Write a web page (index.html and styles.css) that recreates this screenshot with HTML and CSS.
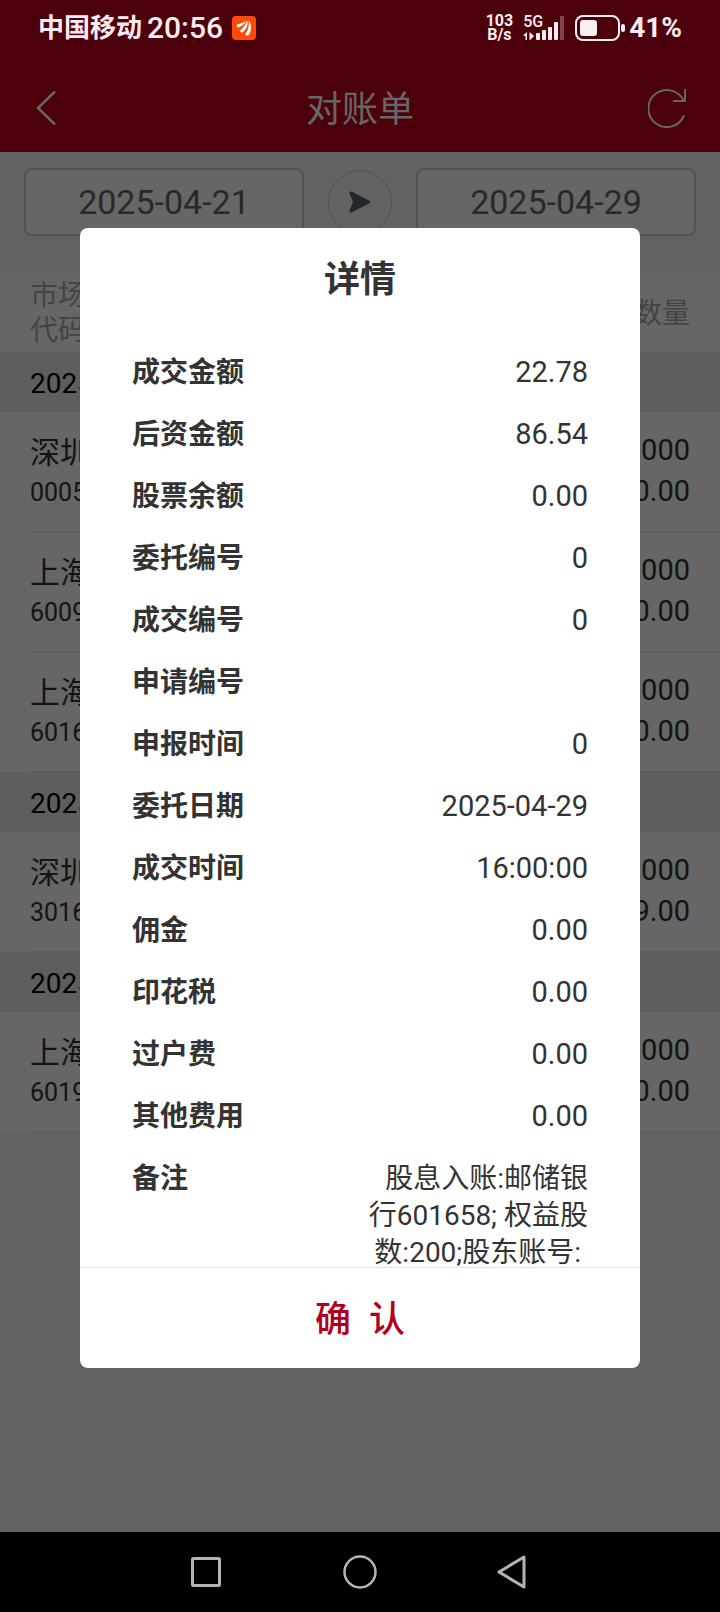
FILE: index.html
```html
<!DOCTYPE html>
<html lang="zh-CN">
<head>
    <meta charset="UTF-8">
    <meta name="viewport" content="width=device-width, initial-scale=1.0">
    <title>对账单</title>
    <link rel="stylesheet" href="styles.css">
</head>
<body>
    <div class="status-bar">
        <div class="status-left">
            <span class="carrier">中国移动</span>
            <span class="clock">20:56</span>
            <svg class="app-icon" width="24" height="24" viewBox="0 0 24 24">
                <rect width="24" height="24" rx="4" fill="#ff4a08"/>
                <path d="M4.500 8.500C8 8 12 6.500 14 4.500C12.500 8.500 9 11 5.500 11.500Z" fill="#fff"/>
                <path d="M8 14.500C11 12 14 8.500 15 4.500C17 9.500 13.500 14.500 9.500 17Z" fill="#fff"/>
                <path d="M13 18.500C16 14.500 17.500 9.500 16.500 4.500C20.500 9 19.500 15.500 16 20Z" fill="#fff"/>
            </svg>
        </div>
        <div class="status-right">
            <span class="net-speed">103<br>B/s</span>
            <div class="signal">
                <span class="net-type">5G</span>
                <svg width="42" height="26" viewBox="0 0 42 26">
                    <path d="M0 20.500L4 17V25H2.500V21Z M6.500 17L11 21L7.500 24.500V25H6.500Z" fill="#fdecef"/>
                    <g fill="#fdecef">
                        <rect x="13" y="18" width="4" height="7" rx="1"/>
                        <rect x="19" y="15" width="4" height="10" rx="1"/>
                        <rect x="25" y="12" width="4" height="13" rx="1"/>
                        <rect x="31" y="7" width="4" height="18" rx="1"/>
                    </g>
                    <rect x="37" y="1" width="4" height="24" rx="1" fill="#85454f"/>
                </svg>
            </div>
            <svg class="battery" width="50" height="26" viewBox="0 0 50 26">
                <rect x="1" y="1" width="43" height="24" rx="7" fill="none" stroke="#fdecef" stroke-width="2"/>
                <rect x="5" y="5" width="17" height="16" rx="3" fill="#f6f0f3"/>
                <rect x="46" y="9" width="4" height="8" rx="2" fill="#fdecef"/>
            </svg>
            <span class="battery-text">41%</span>
        </div>
    </div>

    <div class="app">
        <header class="header">
            <button class="icon-btn" aria-label="返回">
                <svg width="22" height="36" viewBox="0 0 22 36">
                    <path d="M21 1.500L4 18L21 34.500" fill="none" stroke="currentColor" stroke-width="2.500"/>
                </svg>
            </button>
            <h1>对账单</h1>
            <button class="icon-btn" aria-label="刷新">
                <svg width="38" height="40" viewBox="0 0 38 40">
                    <path d="M36 27.500A18.500 18.500 0 1 1 36 13.500" fill="none" stroke="currentColor" stroke-width="2"/>
                    <path d="M37 1V13H25" fill="none" stroke="currentColor" stroke-width="2"/>
                </svg>
            </button>
        </header>

        <form class="date-bar">
            <input type="text" value="2025-04-21" aria-label="开始日期" readonly>
            <button class="query-btn" type="button" aria-label="查询">
                <svg width="22" height="24" viewBox="0 0 22 24">
                    <path d="M2.500 1.500L20 10.500Q22 12 20 13.500L2.500 22.500Q0 23 .5 20.500L4 12L.5 3.500Q0 1 2.500 1.500Z" fill="#506473"/>
                </svg>
            </button>
            <input type="text" value="2025-04-29" aria-label="结束日期" readonly>
        </form>

        <table class="list">
            <thead>
                <tr>
                    <th>市场<br>代码</th>
                    <th class="right">成交数量</th>
                </tr>
            </thead>
            <tbody>
                <tr class="group"><th colspan="2">2025-04-29</th></tr>
                <tr>
                    <td><div class="cell"><span class="market">深圳</span><span class="code">000538</span></div></td>
                    <td><div class="cell right"><span>0.0000</span><span>0.00</span></div></td>
                </tr>
                <tr>
                    <td><div class="cell"><span class="market">上海</span><span class="code">600900</span></div></td>
                    <td><div class="cell right"><span>0.0000</span><span>0.00</span></div></td>
                </tr>
                <tr>
                    <td><div class="cell"><span class="market">上海</span><span class="code">601658</span></div></td>
                    <td><div class="cell right"><span>0.0000</span><span>0.00</span></div></td>
                </tr>
                <tr class="group"><th colspan="2">2025-04-25</th></tr>
                <tr>
                    <td><div class="cell"><span class="market">深圳</span><span class="code">301600</span></div></td>
                    <td><div class="cell right"><span>0.0000</span><span>9.00</span></div></td>
                </tr>
                <tr class="group"><th colspan="2">2025-04-23</th></tr>
                <tr>
                    <td><div class="cell"><span class="market">上海</span><span class="code">601988</span></div></td>
                    <td><div class="cell right"><span>0.0000</span><span>0.00</span></div></td>
                </tr>
            </tbody>
        </table>

        <div class="mask">
            <div class="dialog" role="dialog" aria-labelledby="dialog-title">
                <h2 id="dialog-title">详情</h2>
                <dl class="details">
                    <div class="row"><dt>成交金额</dt><dd>22.78</dd></div>
                    <div class="row"><dt>后资金额</dt><dd>86.54</dd></div>
                    <div class="row"><dt>股票余额</dt><dd>0.00</dd></div>
                    <div class="row"><dt>委托编号</dt><dd>0</dd></div>
                    <div class="row"><dt>成交编号</dt><dd>0</dd></div>
                    <div class="row"><dt>申请编号</dt><dd></dd></div>
                    <div class="row"><dt>申报时间</dt><dd>0</dd></div>
                    <div class="row"><dt>委托日期</dt><dd>2025-04-29</dd></div>
                    <div class="row"><dt>成交时间</dt><dd>16:00:00</dd></div>
                    <div class="row"><dt>佣金</dt><dd>0.00</dd></div>
                    <div class="row"><dt>印花税</dt><dd>0.00</dd></div>
                    <div class="row"><dt>过户费</dt><dd>0.00</dd></div>
                    <div class="row"><dt>其他费用</dt><dd>0.00</dd></div>
                    <div class="row"><dt>备注</dt><dd class="note">股息入账:邮储银行601658; 权益股数:200;股东账号:&nbsp;</dd></div>
                </dl>
                <button class="confirm">确&nbsp;&nbsp;认</button>
            </div>
        </div>
    </div>

    <nav class="nav-bar">
        <button aria-label="最近任务">
            <svg width="36" height="36" viewBox="0 0 36 36"><rect x="4.500" y="4.500" width="27" height="27" rx="1" fill="none" stroke="#b4b4b4" stroke-width="3"/></svg>
        </button>
        <button aria-label="主屏幕">
            <svg width="36" height="36" viewBox="0 0 36 36"><circle cx="18" cy="18" r="15.500" fill="none" stroke="#b4b4b4" stroke-width="2.500"/></svg>
        </button>
        <button aria-label="返回上一级">
            <svg width="36" height="36" viewBox="0 0 36 36"><path d="M28 3V33L3 18Z" fill="none" stroke="#b4b4b4" stroke-width="3" stroke-linejoin="round"/></svg>
        </button>
    </nav>
</body>
</html>
```

FILE: styles.css
```css
* { box-sizing: border-box; margin: 0; padding: 0; }

body {
    font-family: Roboto, "Noto Sans CJK SC", sans-serif;
    font-size: 28px;
    display: flex;
    flex-direction: column;
    min-height: 100vh;
    background: #f5f5fb;
    color: #333;
}

button, input { font: inherit; color: inherit; border: none; background: none; }
button { cursor: pointer; }
svg { display: block; }

/* status bar */
.status-bar {
    display: flex;
    justify-content: space-between;
    height: 64px;
    padding: 10px 38px 18px;
    background: #4c000c;
    color: #fdecef;
    font-weight: 500;
}

.status-left, .status-right { display: flex; align-items: center; }
.carrier { font-size: 26px; line-height: 36px; font-weight: 700; }
.clock { font-size: 30px; line-height: 36px; margin: 0 9px 0 5px; }
.net-speed { font-size: 16px; line-height: 14px; font-weight: 700; text-align: center; margin-right: 10px; }
.signal { position: relative; margin-right: 10px; }
.net-type { position: absolute; left: 0; top: 0; font-size: 16px; line-height: 14px; }
.battery-text { font-size: 28px; line-height: 36px; margin-left: 4px; font-weight: 700; }

/* page */
.app { flex: 1; position: relative; }

.header {
    display: flex;
    align-items: center;
    justify-content: space-between;
    height: 88px;
    padding: 0 34px;
    background: #be001e;
    color: #fff;
}

.header h1 { font-size: 36px; font-weight: 400; padding-bottom: 4px; }
.icon-btn { width: 38px; }

.date-bar {
    display: flex;
    align-items: center;
    gap: 24px;
    padding: 16px 24px 36px;
}

.date-bar input {
    flex: 1;
    min-width: 0;
    height: 68px;
    border: 2px solid #d0d0d0;
    border-radius: 8px;
    background: #fff;
    color: #666;
    font-size: 34px;
    text-align: center;
}

.query-btn {
    display: flex;
    align-items: center;
    justify-content: center;
    width: 64px;
    height: 64px;
    border: 1px solid #ccc;
    border-radius: 50%;
}

.list { width: 100%; border-collapse: collapse; background: #fff; }

.list th {
    height: 80px;
    padding: 2px 30px 0;
    line-height: 35px;
    font-weight: 400;
    text-align: left;
    color: #aaa;
}

.list .group th { height: 60px; background: #ebebeb; color: #000; }

.cell {
    display: flex;
    flex-direction: column;
    height: 120px;
    margin-left: 30px;
    padding-top: 21px;
    border-bottom: 1px solid #ebebeb;
    line-height: 40px;
}

.list .right { text-align: right; }
.cell.right { margin-left: 0; padding: 18px 30px 0 0; font-size: 29px; line-height: 41px; }
.market { font-size: 30px; }
.code { font-size: 25px; }

/* dialog */
.mask {
    position: absolute;
    inset: 0;
    display: flex;
    padding: 164px 80px;
    background: rgba(0, 0, 0, 0.6);
}

.dialog {
    flex: 1;
    display: flex;
    flex-direction: column;
    min-width: 0;
    border-radius: 8px;
    overflow: hidden;
    background: #fff;
}

.dialog h2 { font-size: 36px; line-height: 104px; text-align: center; }

.details {
    flex: 1 1 0;
    min-height: 0;
    overflow: hidden;
    padding: 10px 52px 0;
}

.row {
    display: flex;
    justify-content: space-between;
    padding: 12px 0 13px;
    line-height: 37px;
}

.row dt { font-weight: 700; }
.row dd { width: 50%; font-size: 29px; text-align: right; }
.row .note { font-size: 28px; }

.confirm {
    height: 101px;
    padding-bottom: 4px;
    border-top: 1px solid #e0e0e0;
    color: #b20020;
    font-size: 36px;
    font-weight: 500;
}

/* system navigation */
.nav-bar {
    display: flex;
    justify-content: center;
    gap: 118px;
    height: 80px;
    background: #000;
}

.nav-bar button { display: flex; align-items: center; }
```
